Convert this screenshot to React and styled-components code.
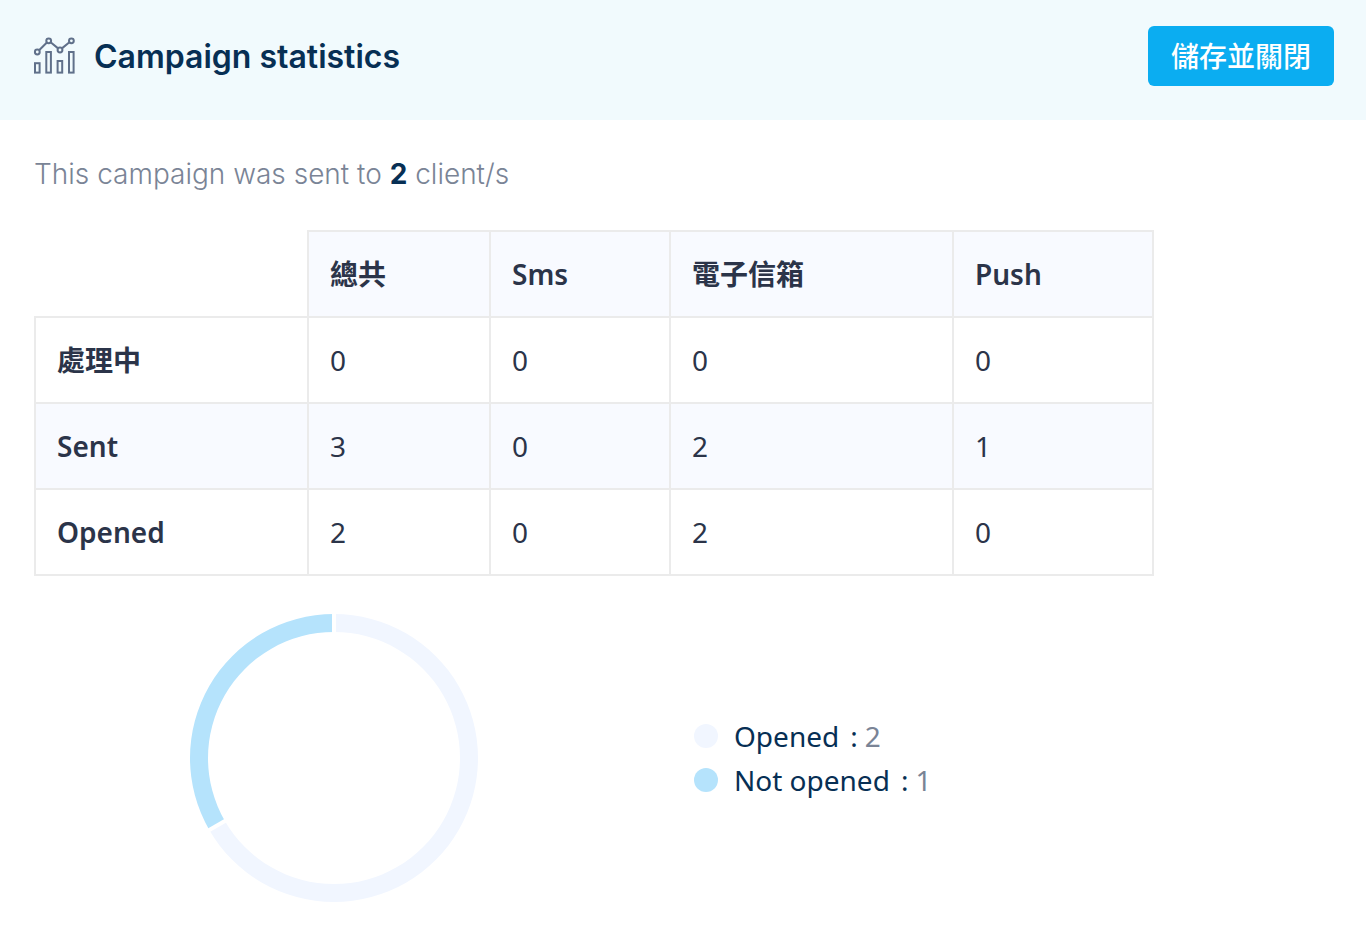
import React from "react";
import styled, { createGlobalStyle } from "styled-components";

const GlobalStyle = createGlobalStyle`
  *, *::before, *::after { box-sizing: border-box; }
  body {
    margin: 0;
    background: #ffffff;
    color: #2b3449;
    font-family: "Noto Sans", "Noto Sans CJK TC", sans-serif;
    font-size: 28px;
    line-height: 44px;
  }
`;

const Header = styled.header`
  display: flex;
  align-items: flex-start;
  justify-content: space-between;
  min-height: 120px;
  padding: 26px 32px 32px;
  background: #f1fafd;
`;

const Heading = styled.div`
  display: flex;
  align-items: center;
  gap: 18px;
  min-height: 60px;
`;

const HeadingIcon = styled.svg`
  flex: none;
  width: 44px;
  height: 40px;
`;

const Title = styled.h1`
  margin: 0;
  padding-top: 2px;
  color: #072f54;
  font-family: Inter, sans-serif;
  font-size: 32px;
  font-weight: 600;
  line-height: 44px;
`;

const SaveButton = styled.button`
  height: 60px;
  padding: 0 23px 2px;
  border: 0;
  border-radius: 6px;
  background: #0badf1;
  color: #ffffff;
  font-family: "Noto Sans CJK TC", sans-serif;
  font-size: 28px;
  font-weight: 500;
  line-height: 44px;
  white-space: nowrap;
  cursor: pointer;
`;

const Content = styled.main`
  max-width: 1188px;
  padding: 32px 34px;
`;

const Summary = styled.p`
  margin: 0 0 34px;
  color: #7a8496;
  font-family: Inter, sans-serif;
  font-weight: 300;
`;

const SummaryCount = styled.strong`
  color: #072f54;
  font-weight: 700;
`;

const StatsTable = styled.table`
  width: 100%;
  table-layout: fixed;
  border-collapse: collapse;
`;

const Column = styled.col`
  width: ${({ $share }) => $share}px;
`;

const Row = styled.tr`
  height: 86px;
  background: ${({ $shaded }) => ($shaded ? "#f8faff" : "#ffffff")};
`;

const HeadCell = styled.th`
  padding: 0 21px;
  border: 2px solid #ebebeb;
  background: ${({ $shaded }) => ($shaded ? "#f8faff" : "transparent")};
  font-weight: 600;
  text-align: left;
`;

const Corner = styled.td`
  border: 0;
`;

const Cell = styled.td`
  padding: 0 21px;
  border: 2px solid #ebebeb;
`;

const ChartRow = styled.section`
  display: grid;
  grid-template-columns: 15fr 13fr;
  align-items: center;
  margin-top: 38px;
`;

const ChartArea = styled.div`
  display: grid;
`;

const Donut = styled.svg`
  justify-self: center;
  width: 288px;
  height: 288px;
`;

const Legend = styled.ul`
  margin: 0;
  padding: 0 0 0 60px;
  list-style: none;
`;

const LegendItem = styled.li`
  display: flex;
  align-items: center;
  color: #072f54;
`;

const Dot = styled.span`
  width: 24px;
  height: 24px;
  margin-right: 16px;
  border-radius: 50%;
  background: ${({ $color }) => $color};
`;

const LegendLabel = styled.span`
  margin-right: 11px;
`;

const LegendValue = styled.span`
  margin-left: 7px;
  color: #7a8496;
`;

const columns = ["總共", "Sms", "電子信箱", "Push"];
const shares = [273, 182, 180, 283, 200];
const rows = [
  { label: "處理中", values: [0, 0, 0, 0] },
  { label: "Sent", values: [3, 0, 2, 1] },
  { label: "Opened", values: [2, 0, 2, 0] },
];
const slices = [
  { label: "Opened", value: 2, color: "#f1f6ff" },
  { label: "Not opened", value: 1, color: "#b5e3fc" },
];

function StatsIcon() {
  return (
    <HeadingIcon viewBox="0 0 44 40" fill="none" stroke="#60708a" strokeWidth="2" aria-hidden="true">
      <path d="M7.1 14.3 14.9 6.5M18.6 6.3 26.1 12.4M29.9 12.4 37.4 6.3" />
      <circle cx="5.3" cy="16" r="2.4" />
      <circle cx="16.7" cy="4.8" r="2.4" />
      <circle cx="28" cy="14" r="2.4" />
      <circle cx="39.4" cy="4.8" r="2.4" />
      <rect x="3" y="27.2" width="4.6" height="9.4" />
      <rect x="14.3" y="16" width="4.6" height="20.6" />
      <rect x="25.6" y="25" width="4.6" height="11.6" />
      <rect x="37" y="16" width="4.6" height="20.6" />
    </HeadingIcon>
  );
}

function DonutChart() {
  const total = slices.reduce((sum, s) => sum + s.value, 0);
  const point = (turn, radius) => {
    const angle = turn * 2 * Math.PI;
    return [144 + radius * Math.sin(angle), 144 - radius * Math.cos(angle)].join(" ");
  };
  let start = 0;
  const arcs = slices.map((s) => {
    const from = start;
    start += s.value / total;
    const large = start - from > 0.5 ? 1 : 0;
    return {
      ...s,
      from,
      d: `M${point(from, 144)}A144 144 0 ${large} 1 ${point(start, 144)}L${point(start, 126)}A126 126 0 ${large} 0 ${point(from, 126)}Z`,
    };
  });
  return (
    <Donut viewBox="0 0 288 288" role="img" aria-label="Opened and not opened">
      {arcs.map((a) => <path key={a.label} d={a.d} fill={a.color} />)}
      {arcs.map((a) => (
        <path key={a.label} d={`M${point(a.from, 124)}L${point(a.from, 146)}`} stroke="#ffffff" strokeWidth="4" />
      ))}
    </Donut>
  );
}

export default function App() {
  return (
    <>
      <GlobalStyle />
      <Header>
        <Heading>
          <StatsIcon />
          <Title>Campaign statistics</Title>
        </Heading>
        <SaveButton type="button">儲存並關閉</SaveButton>
      </Header>
      <Content>
        <Summary>
          This campaign was sent to <SummaryCount>2</SummaryCount> client/s
        </Summary>
        <StatsTable>
          <colgroup>
            {shares.map((share, i) => <Column key={i} $share={share} />)}
          </colgroup>
          <thead>
            <Row>
              <Corner />
              {columns.map((c) => <HeadCell key={c} scope="col" $shaded>{c}</HeadCell>)}
            </Row>
          </thead>
          <tbody>
            {rows.map((r, i) => (
              <Row key={r.label} $shaded={i % 2 === 1}>
                <HeadCell scope="row">{r.label}</HeadCell>
                {r.values.map((v, j) => <Cell key={j}>{v}</Cell>)}
              </Row>
            ))}
          </tbody>
        </StatsTable>
        <ChartRow>
          <ChartArea><DonutChart /></ChartArea>
          <Legend>
            {slices.map((s) => (
              <LegendItem key={s.label}>
                <Dot $color={s.color} />
                <LegendLabel>{s.label}</LegendLabel>:
                <LegendValue>{s.value}</LegendValue>
              </LegendItem>
            ))}
          </Legend>
        </ChartRow>
      </Content>
    </>
  );
}
